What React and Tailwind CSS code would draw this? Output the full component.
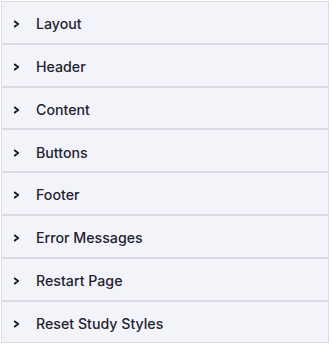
import React from "react";

const sections = [
  "Layout",
  "Header",
  "Content",
  "Buttons",
  "Footer",
  "Error Messages",
  "Restart Page",
  "Reset Study Styles",
];

const Chevron = () => (
  <svg width="8" height="8" viewBox="0 0 8 8" fill="none" className="shrink-0">
    <path
      d="M1.8 1.4 L5.2 4 L1.8 6.6"
      stroke="#111827"
      strokeWidth="1.9"
      strokeLinecap="round"
      strokeLinejoin="round"
    />
  </svg>
);

export default function App() {
  return (
    <div
      className="w-[330px] p-px bg-white"
      style={{ fontFamily: "Inter, 'Noto Sans', sans-serif" }}
    >
      {sections.map((name) => (
        <div
          key={name}
          className="h-[42.8px] flex items-center gap-[15px] pl-[11px] pt-[3.5px] border border-[#d9dae4] bg-[#f3f4fa] cursor-pointer"
        >
          <Chevron />
          <span className="text-[14.2px] leading-5 font-medium text-[#1f2330]">
            {name}
          </span>
        </div>
      ))}
    </div>
  );
}
